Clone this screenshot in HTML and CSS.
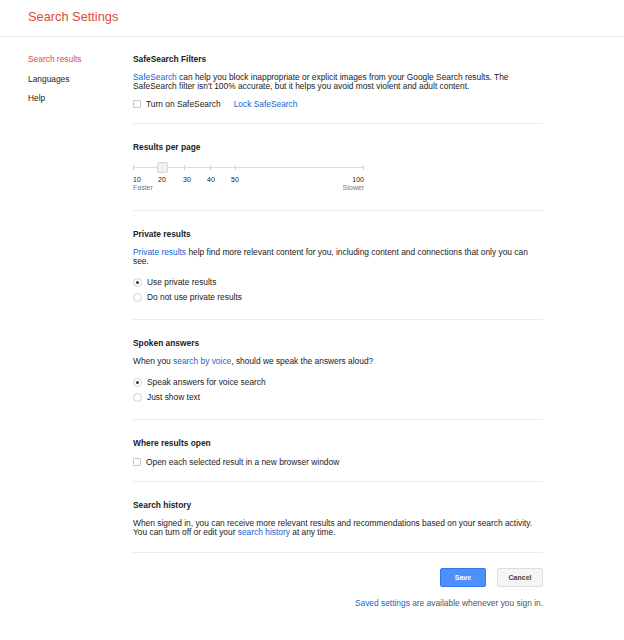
FILE: index.html
```html
<!DOCTYPE html>
<html lang="en">
<head>
<meta charset="utf-8">
<title>Search Settings</title>
<link rel="stylesheet" href="styles.css">
</head>
<body>
<header class="topbar">
  <h1 class="title">Search Settings</h1>
</header>
<div class="layout">
  <nav class="sidenav">
    <a class="nav-item active">Search results</a>
    <a class="nav-item">Languages</a>
    <a class="nav-item">Help</a>
  </nav>
  <main class="content">
    <section class="section">
      <h2 class="section-title">SafeSearch Filters</h2>
      <p class="desc"><a class="link">SafeSearch</a> can help you block inappropriate or explicit images from your Google Search results. The SafeSearch filter isn't 100% accurate, but it helps you avoid most violent and adult content.</p>
      <div class="option safe-row">
        <span class="checkbox"></span>
        <span class="option-label">Turn on SafeSearch</span>
        <a class="link lock">Lock SafeSearch</a>
      </div>
    </section>

    <section class="section">
      <h2 class="section-title">Results per page</h2>
      <div class="slider">
        <span class="track"></span>
        <span class="tick" style="left:0px"></span>
        <span class="tick" style="left:26px"></span>
        <span class="tick" style="left:51px"></span>
        <span class="tick" style="left:77px"></span>
        <span class="tick" style="left:102px"></span>
        <span class="tick" style="left:230px"></span>
        <span class="handle" style="left:24px"></span>
      </div>
      <div class="scale">
        <span class="num" style="left:0px">10</span>
        <span class="num" style="left:25px">20</span>
        <span class="num" style="left:50px">30</span>
        <span class="num" style="left:74px">40</span>
        <span class="num" style="left:98px">50</span>
        <span class="num num-last">100</span>
      </div>
      <div class="scale-ends"><span>Faster</span><span>Slower</span></div>
    </section>

    <section class="section">
      <h2 class="section-title">Private results</h2>
      <p class="desc narrow"><a class="link">Private results</a> help find more relevant content for you, including content and connections that only you can see.</p>
      <div class="radio-group">
        <div class="option"><span class="radio checked"></span><span class="option-label">Use private results</span></div>
        <div class="option"><span class="radio"></span><span class="option-label">Do not use private results</span></div>
      </div>
    </section>

    <section class="section">
      <h2 class="section-title">Spoken answers</h2>
      <p class="desc">When you <a class="link">search by voice</a>, should we speak the answers aloud?</p>
      <div class="radio-group">
        <div class="option"><span class="radio checked"></span><span class="option-label">Speak answers for voice search</span></div>
        <div class="option"><span class="radio"></span><span class="option-label">Just show text</span></div>
      </div>
    </section>

    <section class="section">
      <h2 class="section-title">Where results open</h2>
      <div class="option open-row">
        <span class="checkbox"></span>
        <span class="option-label">Open each selected result in a new browser window</span>
      </div>
    </section>

    <section class="section">
      <h2 class="section-title">Search history</h2>
      <p class="desc history">When signed in, you can receive more relevant results and recommendations based on your search activity. You can turn off or edit your <a class="link">search history</a> at any time.</p>
    </section>

    <div class="actions">
      <button class="btn btn-save">Save</button>
      <button class="btn btn-cancel">Cancel</button>
    </div>
    <p class="footnote"><a class="link">Saved settings</a> are available whenever you sign in.</p>
  </main>
</div>
</body>
</html>
```

FILE: styles.css
```css
* { box-sizing: border-box; }

body {
  margin: 0;
  font-family: "Liberation Sans", Arial, sans-serif;
  font-size: 8.4px;
  color: #222;
  background: #fff;
}

.topbar {
  height: 37px;
  border-bottom: 1px solid #ebebeb;
  padding-left: 28px;
  display: flex;
  align-items: center;
}

.title {
  margin: 0;
  font-size: 12.8px;
  font-weight: normal;
  color: #dd4b39;
  line-height: 14px;
  padding-bottom: 3px;
}

.layout {
  display: flex;
  padding-left: 28px;
}

.sidenav {
  width: 105px;
  padding-top: 17px;
  display: flex;
  flex-direction: column;
  gap: 9.5px;
}

.nav-item {
  line-height: 10px;
  color: #222;
}

.nav-item.active { color: #dd4b39; }

.content {
  width: 410px;
}

.section {
  padding: 17px 0 14px;
  border-bottom: 1px solid #ebebeb;
}

.section + .section { padding-top: 18px; }

.section-title {
  margin: 0 0 9px;
  font-size: 8.4px;
  font-weight: bold;
  line-height: 10px;
  color: #222;
}

.desc {
  margin: 0;
  line-height: 9px;
}

.desc.narrow { padding-right: 4px; }

.desc.history { margin-bottom: 1px; }

.link { color: #1a5fd0; text-decoration: none; }

.option {
  display: flex;
  align-items: center;
  height: 10px;
  line-height: 10px;
}

.safe-row { margin-top: 8px; }
.open-row { margin-top: 1px; }

.option-label { color: #222; }

.checkbox {
  width: 8px;
  height: 8px;
  border: 1px solid #c6c6c6;
  border-radius: 1px;
  background: #fff;
  margin-right: 5px;
  flex: none;
}

.lock { margin-left: 13px; }

.radio-group {
  margin-top: 11px;
  margin-bottom: 3px;
  display: flex;
  flex-direction: column;
  gap: 5px;
}

.radio {
  width: 9px;
  height: 9px;
  border: 1px solid #cfcfcf;
  border-radius: 50%;
  margin-right: 5px;
  flex: none;
  display: flex;
  align-items: center;
  justify-content: center;
  background: #fff;
}

.radio.checked::after {
  content: "";
  width: 3px;
  height: 3px;
  border-radius: 50%;
  background: #333;
}

.slider {
  position: relative;
  width: 231px;
  height: 11px;
  margin-top: 10px;
}

.track {
  position: absolute;
  left: 0;
  right: 0;
  top: 5px;
  height: 1px;
  background: #dcdcdc;
}

.tick {
  position: absolute;
  top: 3px;
  width: 1px;
  height: 5px;
  background: #cfcfcf;
}

.handle {
  position: absolute;
  top: 0;
  width: 11px;
  height: 11px;
  background: #f1f1f1;
  border: 1px solid #d6d6d6;
  border-radius: 2px;
}

.scale {
  position: relative;
  width: 231px;
  height: 8px;
  margin-top: 3px;
  line-height: 8px;
  font-size: 7px;
}

.num {
  position: absolute;
  top: 0;
  color: #222;
}

.num-last { right: 0; }

.scale-ends {
  width: 231px;
  display: flex;
  justify-content: space-between;
  line-height: 8px;
  font-size: 7px;
  color: #777;
  margin-bottom: 4px;
}

.actions {
  display: flex;
  justify-content: flex-end;
  gap: 11px;
  margin-top: 15px;
}

.btn {
  width: 46px;
  height: 19px;
  font-family: inherit;
  font-size: 7px;
  font-weight: bold;
  border-radius: 2px;
  padding: 0;
}

.btn-save {
  background: #4d90fe;
  border: 1px solid #3079ed;
  color: #fff;
}

.btn-cancel {
  background: #f5f5f5;
  border: 1px solid #dcdcdc;
  color: #444;
}

.footnote {
  margin: 11px 0 0;
  text-align: right;
  line-height: 10px;
  color: #555;
}
```
